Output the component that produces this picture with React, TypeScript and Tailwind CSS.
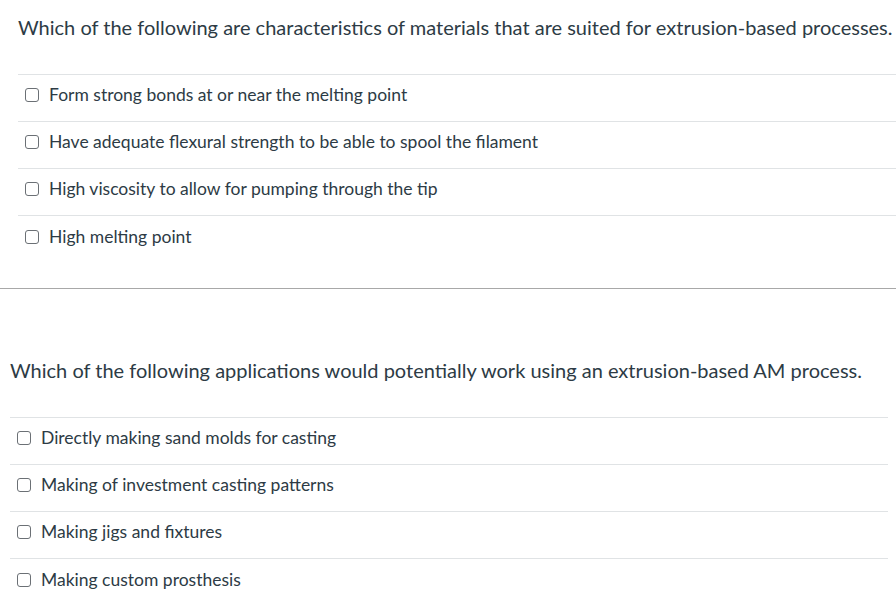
import React from "react";

const Box = () => (
  <span className="inline-block w-[14px] h-[14px] border border-[#6b7075] rounded-[3px] bg-white shrink-0" />
);

const Option = ({ text, last }: { text: string; last?: boolean }) => (
  <div className={`h-[47px] flex items-center pl-[7px] pb-[6px] gap-[10px] ${last ? "" : "border-b border-[#e0e3e5]"}`}>
    <Box />
    <span className="text-[17.5px] leading-[22px] text-[#2d3b45]">{text}</span>
  </div>
);

export default function App() {
  return (
    <div className="w-[896px] h-[612px] bg-white overflow-hidden" style={{ fontFamily: "Lato, 'Noto Sans', sans-serif" }}>
      <div className="pl-[18px]">
        <div className="pt-[13px] h-[74px] text-[20px] leading-[28px] text-[#2d3b45] whitespace-nowrap">
          Which of the following are characteristics of materials that are suited for extrusion-based processes.
        </div>
        <div className="border-t border-[#e0e3e5]">
          <Option text="Form strong bonds at or near the melting point" />
          <Option text="Have adequate flexural strength to be able to spool the filament" />
          <Option text="High viscosity to allow for pumping through the tip" />
          <Option text="High melting point" last />
        </div>
      </div>
      <div className="mt-[25px] border-t border-[#a8a8a8]" />
      <div className="pl-[10px] pr-[8px]">
        <div className="pt-[67px] h-[128px] text-[20px] leading-[28px] text-[#2d3b45] whitespace-nowrap">
          Which of the following applications would potentially work using an extrusion-based AM process.
        </div>
        <div className="border-t border-[#e0e3e5]">
          <Option text="Directly making sand molds for casting" />
          <Option text="Making of investment casting patterns" />
          <Option text="Making jigs and fixtures" />
          <Option text="Making custom prosthesis" last />
        </div>
      </div>
    </div>
  );
}
